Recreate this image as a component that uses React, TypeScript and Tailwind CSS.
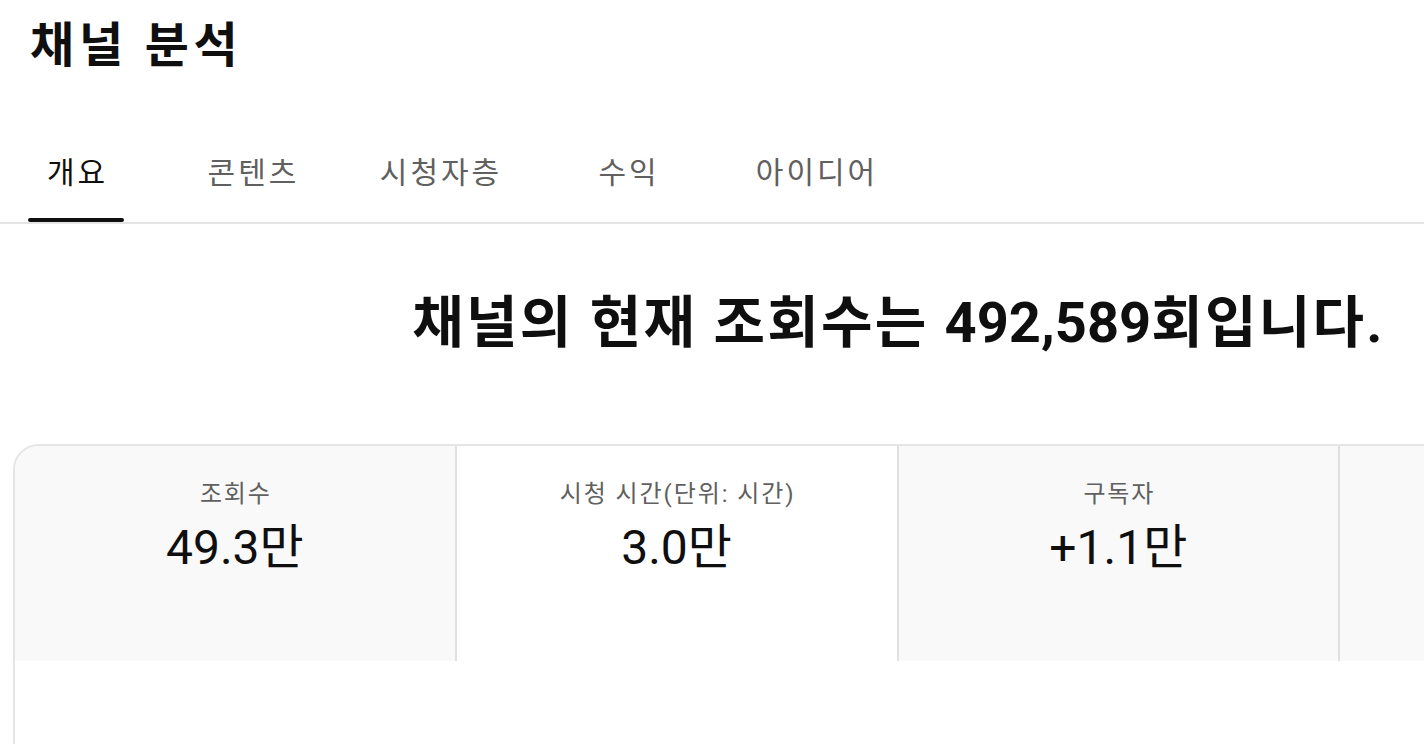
import React from "react";

const tabs = [
  { label: "개요", width: "w-[96px]", margin: "ml-0", active: true },
  { label: "콘텐츠", width: "w-[128px]", margin: "ml-[64px]", active: false },
  { label: "시청자층", width: "w-[157px]", margin: "ml-[45px]", active: false },
  { label: "수익", width: "w-[97px]", margin: "ml-[61px]", active: false },
  { label: "아이디어", width: "w-[157px]", margin: "ml-[61px]", active: false },
];

const stats = [
  { label: "조회수", value: "49.3만", bg: "bg-[#f9f9f9]", sep: true },
  { label: "시청 시간(단위: 시간)", value: "3.0만", bg: "bg-white", sep: true },
  { label: "구독자", value: "+1.1만", bg: "bg-[#f9f9f9]", sep: true },
  { label: "", value: "", bg: "bg-[#f9f9f9]", sep: false },
];

const App = () => {
  return (
    <div className="w-[1424px] h-[744px] overflow-hidden bg-white text-[#0f0f0f] font-['Roboto','Noto_Sans_CJK_KR',sans-serif]">
      <div className="h-[92px] flex items-center pl-[30px]">
        <h1 className="text-[48px] font-bold leading-none tracking-[0.1em]">채널 분석</h1>
      </div>

      <div className="mt-[32px] flex pl-[28px] border-b-2 border-[#e5e5e5]">
        {tabs.map((tab) => (
          <div key={tab.label} className={`flex flex-col ${tab.width} ${tab.margin}`}>
            <div
              className={`h-[94px] pt-[4px] pl-[3px] flex items-center justify-center text-[30px] leading-none tracking-[0.1em] ${
                tab.active ? "text-[#0f0f0f]" : "text-[#606060]"
              }`}
            >
              {tab.label}
            </div>
            <div className={`h-[4px] rounded-full ${tab.active ? "bg-[#0f0f0f]" : "bg-transparent"}`} />
          </div>
        ))}
      </div>

      <div className="pl-[13px]">
        <div className="w-[1771px]">
          <div className="h-[220px] pt-[67px] text-center">
            <h2 className="text-[56px] font-bold leading-[64px] tracking-[0.04em]">
              채널의 현재 조회수는 <span className="tracking-normal">492,589</span>회입니다.
            </h2>
          </div>

          <div className="h-[400px] border-2 border-[#e5e5e5] rounded-[26px] overflow-hidden">
            <div className="grid grid-cols-4 h-[215px]">
              {stats.map((s, i) => (
                <div
                  key={i}
                  className={`${s.bg} ${s.sep ? "border-r-2 border-[#e0e0e0]" : ""} flex flex-col items-center pt-[32px]`}
                >
                  <div className="text-[24px] leading-[32px] text-[#606060] tracking-[0.08em] pl-[2px]">{s.label}</div>
                  <div className="mt-[10px] text-[48px] leading-[56px]">{s.value}</div>
                </div>
              ))}
            </div>
          </div>
        </div>
      </div>
    </div>
  );
};

export default App;
